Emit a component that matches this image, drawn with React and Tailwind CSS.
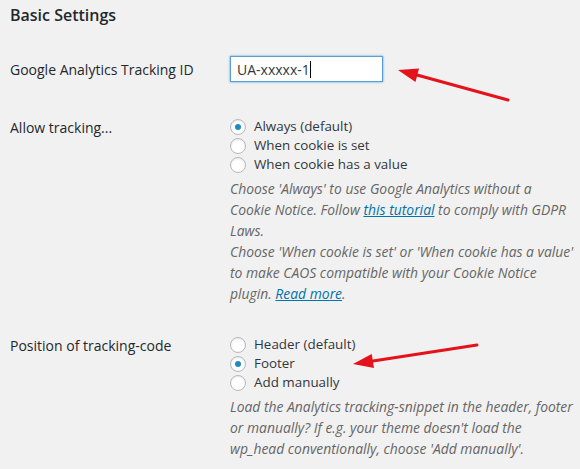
import React from 'react'

// WordPress-style settings screen: "Basic Settings" form table with two red annotation arrows.

function Radio({ label, checked }) {
  return (
    <label className="flex items-center h-[19px]">
      <span className="w-4 h-4 rounded-full border border-[#b4b9be] bg-white shadow-[inset_0_1px_2px_rgba(0,0,0,0.1)] flex items-center justify-center shrink-0">
        {checked && <span className="w-[6px] h-[6px] rounded-full bg-[#1e8cbe]" />}
      </span>
      <span className="ml-2 text-[13.4px] text-[#32373c]">{label}</span>
    </label>
  )
}

function Row({ label, children, className }) {
  return (
    <div className={'flex ' + (className || '')}>
      <div className="w-[220px] shrink-0 pt-[1px] text-[14px] text-[#23282d] leading-[19px]">{label}</div>
      <div className="flex-1">{children}</div>
    </div>
  )
}

function Help({ children }) {
  return (
    <p className="mt-[4px] whitespace-nowrap italic text-[13.9px] leading-[21px] text-[#666]">{children}</p>
  )
}

export default function App() {
  return (
    <div
      className="relative w-[580px] h-[469px] overflow-hidden bg-[#f1f1f1] pl-[10px] text-[#23282d]"
      style={{ fontFamily: '"Open Sans", "Noto Sans", sans-serif' }}
    >
      <h2 className="pt-[4px] text-[16px] leading-[23px] font-semibold text-[#23282d]">Basic Settings</h2>

      <div className="flex items-center mt-[29px]">
        <div className="w-[220px] shrink-0 text-[14px]">Google Analytics Tracking ID</div>
        <div className="w-[153px] h-[26px] bg-white border border-[#5b9dd9] shadow-[0_0_2px_rgba(30,140,190,0.8)] flex items-center px-[6px] text-[14px] text-[#32373c]">
          UA-xxxxx-1
          <span className="w-px h-[17px] bg-black" />
        </div>
      </div>

      <Row label="Allow tracking..." className="mt-[35px]">
        <Radio label="Always (default)" checked />
        <Radio label="When cookie is set" />
        <Radio label="When cookie has a value" />
        <Help>
          Choose 'Always' to use Google Analytics without a<br />
          Cookie Notice. Follow <a className="text-[#0073aa] underline">this tutorial</a> to comply with GDPR<br />
          Laws.<br />
          Choose 'When cookie is set' or 'When cookie has a value'<br />
          to make CAOS compatible with your Cookie Notice<br />
          plugin. <a className="text-[#0073aa] underline">Read more</a>.
        </Help>
      </Row>

      <Row label="Position of tracking-code" className="mt-[31px]">
        <Radio label="Header (default)" />
        <Radio label="Footer" checked />
        <Radio label="Add manually" />
        <Help>
          Load the Analytics tracking-snippet in the header, footer<br />
          or manually? If e.g. your theme doesn't load the<br />
          wp_head conventionally, choose 'Add manually'.
        </Help>
      </Row>

      <svg className="absolute inset-0 pointer-events-none" width="580" height="469" viewBox="0 0 580 469">
        <line x1="508" y1="100" x2="417" y2="75" stroke="#e4121a" strokeWidth="3" strokeLinecap="round" />
        <polygon points="398,70 419,68.5 415.5,82" fill="#e4121a" />
        <line x1="477" y1="345" x2="373" y2="361" stroke="#e4121a" strokeWidth="3" strokeLinecap="round" />
        <polygon points="353,364 374,368 371.7,354" fill="#e4121a" />
      </svg>
    </div>
  )
}
